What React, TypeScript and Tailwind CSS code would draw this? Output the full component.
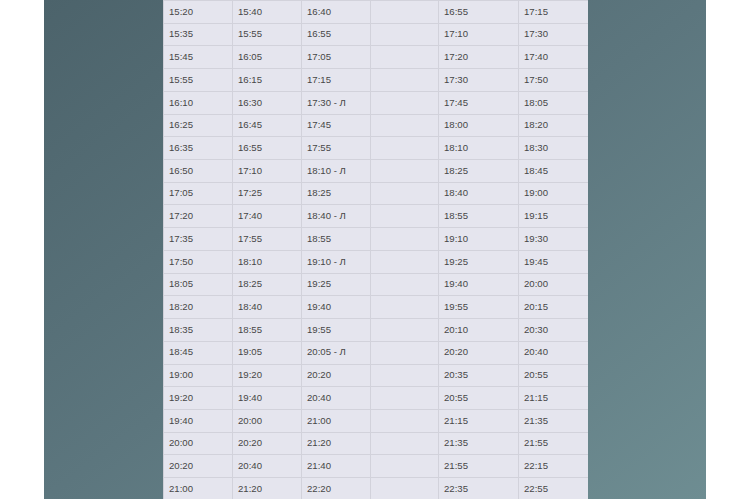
import React from "react";

const rows: string[][] = [
  ["15:20", "15:40", "16:40", "", "16:55", "17:15"],
  ["15:35", "15:55", "16:55", "", "17:10", "17:30"],
  ["15:45", "16:05", "17:05", "", "17:20", "17:40"],
  ["15:55", "16:15", "17:15", "", "17:30", "17:50"],
  ["16:10", "16:30", "17:30 - Л", "", "17:45", "18:05"],
  ["16:25", "16:45", "17:45", "", "18:00", "18:20"],
  ["16:35", "16:55", "17:55", "", "18:10", "18:30"],
  ["16:50", "17:10", "18:10 - Л", "", "18:25", "18:45"],
  ["17:05", "17:25", "18:25", "", "18:40", "19:00"],
  ["17:20", "17:40", "18:40 - Л", "", "18:55", "19:15"],
  ["17:35", "17:55", "18:55", "", "19:10", "19:30"],
  ["17:50", "18:10", "19:10 - Л", "", "19:25", "19:45"],
  ["18:05", "18:25", "19:25", "", "19:40", "20:00"],
  ["18:20", "18:40", "19:40", "", "19:55", "20:15"],
  ["18:35", "18:55", "19:55", "", "20:10", "20:30"],
  ["18:45", "19:05", "20:05 - Л", "", "20:20", "20:40"],
  ["19:00", "19:20", "20:20", "", "20:35", "20:55"],
  ["19:20", "19:40", "20:40", "", "20:55", "21:15"],
  ["19:40", "20:00", "21:00", "", "21:15", "21:35"],
  ["20:00", "20:20", "21:20", "", "21:35", "21:55"],
  ["20:20", "20:40", "21:40", "", "21:55", "22:15"],
  ["21:00", "21:20", "22:20", "", "22:35", "22:55"],
];

export default function App() {
  return (
    <div className="w-[750px] h-[499px] overflow-hidden bg-white flex">
      <div className="ml-[44px] w-[662px] h-[499px] bg-gradient-to-br from-[#4c636b] via-[#5c767e] to-[#6e8d92] flex pl-[119px]">
        <div
          className="w-[425px] h-[499px] overflow-hidden bg-[#e5e5ee] border-l border-[#cfcfd8] text-[#474747] text-[9.6px]"
          style={{ fontFamily: '"Liberation Sans", Arial, sans-serif' }}
        >
          {rows.map((r, i) => (
            <div
              key={i}
              className="grid grid-cols-[69px_69px_69px_68px_80px_69px] h-[22.72px] border-t border-[#d2d2db]"
            >
              {r.map((c, j) => (
                <div
                  key={j}
                  className={`flex items-center pl-[5px] ${j < 5 ? "border-r border-[#d2d2db]" : ""}`}
                >
                  {c}
                </div>
              ))}
            </div>
          ))}
        </div>
      </div>
    </div>
  );
}
